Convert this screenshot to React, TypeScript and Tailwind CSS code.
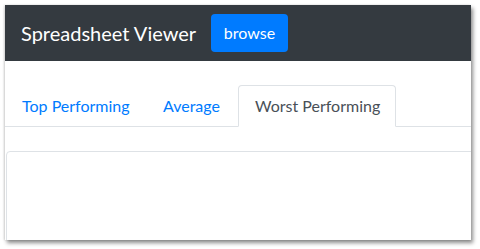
import React from "react";

export default function App() {
  const font = { fontFamily: 'Lato, "Noto Sans", sans-serif' };
  return (
    <div className="w-[480px] h-[249px] bg-white pt-[5px] pl-[5px] overflow-hidden" style={font}>
      <div className="w-[466px] h-[235px] bg-white overflow-hidden flex flex-col shadow-[2px_3px_4px_rgba(0,0,0,0.45),-1px_0_2px_rgba(0,0,0,0.15)]">
        <nav className="h-[56px] shrink-0 bg-[#343a40] flex items-center px-4">
          <span className="text-[20px] leading-[30px] text-white w-[174px] shrink-0 whitespace-nowrap mr-4">Spreadsheet Viewer</span>
          <button className="h-[38px] w-[77px] shrink-0 rounded-[4px] bg-[#007bff] text-white text-[16px] leading-6">
            browse
          </button>
        </nav>
        <div className="pt-6 flex flex-col flex-1">
          <ul className="flex border-b border-[#dee2e6] text-[16px] leading-6">
            <li className="w-[141px] -mb-px">
              <span className="block border border-transparent rounded-t-[4px] py-2 pl-4 text-[#007bff] whitespace-nowrap">Top Performing</span>
            </li>
            <li className="w-[92px] -mb-px">
              <span className="block border border-transparent rounded-t-[4px] py-2 pl-4 text-[#007bff] whitespace-nowrap">Average</span>
            </li>
            <li className="w-[158px] -mb-px">
              <span className="block border border-[#dee2e6] border-b-white bg-white rounded-t-[4px] py-2 pl-4 text-[#495057] whitespace-nowrap">Worst Performing</span>
            </li>
          </ul>
          <div className="mt-6 flex-1 border border-[#dee2e6] rounded-[4px] ml-px -mr-2 -mb-2"></div>
        </div>
      </div>
    </div>
  );
}
